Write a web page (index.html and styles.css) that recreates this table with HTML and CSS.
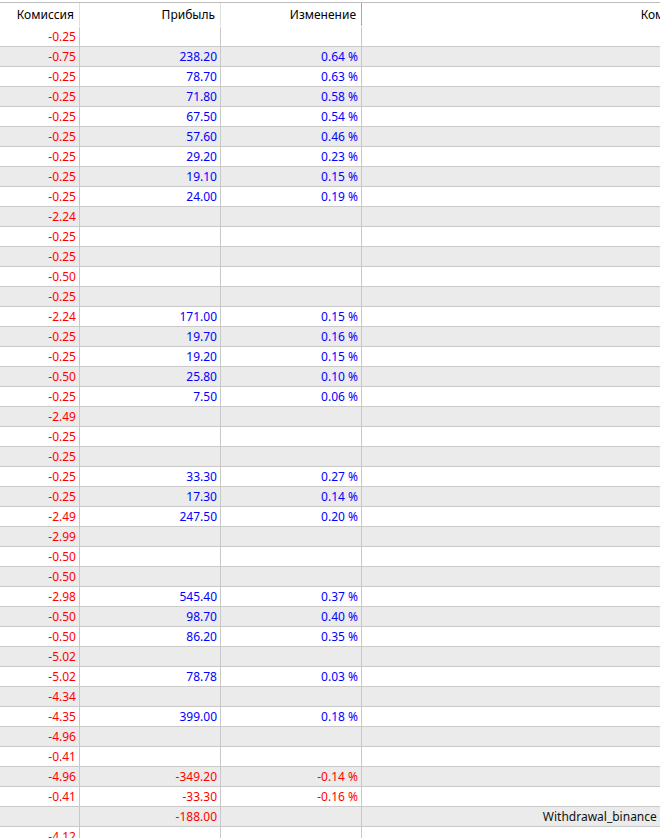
FILE: index.html
```html
<!DOCTYPE html>
<html lang="ru">
<head>
<meta charset="utf-8">
<link rel="stylesheet" href="styles.css">
</head>
<body>
<div class="view">
  <div class="grid" id="grid">
    <div class="row head">
      <div class="c c1">Комиссия</div>
      <div class="c c2">Прибыль</div>
      <div class="c c3">Изменение</div>
      <div class="c c4">Комментарий</div>
    </div>
  </div>
</div>
<script src="app.js"></script>
</body>
</html>
```
FILE: styles.css
```css
html, body {
  margin: 0;
  padding: 0;
  background: #fff;
}
.view {
  width: 660px;
  height: 838px;
  overflow: hidden;
}
.grid {
  width: 800px;
  font-family: "Noto Sans", "Open Sans", sans-serif;
  font-size: 12px;
}
.row {
  display: grid;
  grid-template-columns: 80px 141px 141px 366px;
  height: 20px;
  background: #fff;
}
.row.alt {
  background: #ebebeb;
}
.c {
  box-sizing: border-box;
  border-right: 1px solid #c9c9c9;
  border-bottom: 1px solid #c9c9c9;
  text-align: right;
  padding-right: 3px;
  line-height: 19px;
  white-space: nowrap;
  overflow: hidden;
}
.row.head {
  margin-top: 2px;
  height: 24px;
  border-top: 1px solid #bdbdbd;
  color: #000;
}
.head .c {
  border-bottom: none;
  border-right-color: #e0e0e0;
  padding-right: 5px;
  line-height: 24px;
  height: 23px;
}
.head .c3 {
  border-right: 1px solid #a8a8a8;
}
.red { color: #ff0000; }
.blue { color: #0000ff; }
.dark { color: #111; }
```
FILE: app.js
```js
var rows = [
  ["-0.25","","",""],
  ["-0.75","238.20","0.64 %",""],
  ["-0.25","78.70","0.63 %",""],
  ["-0.25","71.80","0.58 %",""],
  ["-0.25","67.50","0.54 %",""],
  ["-0.25","57.60","0.46 %",""],
  ["-0.25","29.20","0.23 %",""],
  ["-0.25","19.10","0.15 %",""],
  ["-0.25","24.00","0.19 %",""],
  ["-2.24","","",""],
  ["-0.25","","",""],
  ["-0.25","","",""],
  ["-0.50","","",""],
  ["-0.25","","",""],
  ["-2.24","171.00","0.15 %",""],
  ["-0.25","19.70","0.16 %",""],
  ["-0.25","19.20","0.15 %",""],
  ["-0.50","25.80","0.10 %",""],
  ["-0.25","7.50","0.06 %",""],
  ["-2.49","","",""],
  ["-0.25","","",""],
  ["-0.25","","",""],
  ["-0.25","33.30","0.27 %",""],
  ["-0.25","17.30","0.14 %",""],
  ["-2.49","247.50","0.20 %",""],
  ["-2.99","","",""],
  ["-0.50","","",""],
  ["-0.50","","",""],
  ["-2.98","545.40","0.37 %",""],
  ["-0.50","98.70","0.40 %",""],
  ["-0.50","86.20","0.35 %",""],
  ["-5.02","","",""],
  ["-5.02","78.78","0.03 %",""],
  ["-4.34","","",""],
  ["-4.35","399.00","0.18 %",""],
  ["-4.96","","",""],
  ["-0.41","","",""],
  ["-4.96","-349.20","-0.14 %",""],
  ["-0.41","-33.30","-0.16 %",""],
  ["","-188.00","","Withdrawal_binance (USDT/BSC)"],
  ["-4.12","","",""]
];
var grid = document.getElementById("grid");
rows.forEach(function (r, i) {
  var row = document.createElement("div");
  row.className = "row" + (i % 2 ? " alt" : "");
  for (var k = 0; k < 4; k++) {
    var c = document.createElement("div");
    c.className = "c c" + (k + 1);
    var v = r[k];
    if (k === 3) c.classList.add("dark");
    else if (v.charAt(0) === "-") c.classList.add("red");
    else c.classList.add("blue");
    c.textContent = v;
    row.appendChild(c);
  }
  grid.appendChild(row);
});
```
